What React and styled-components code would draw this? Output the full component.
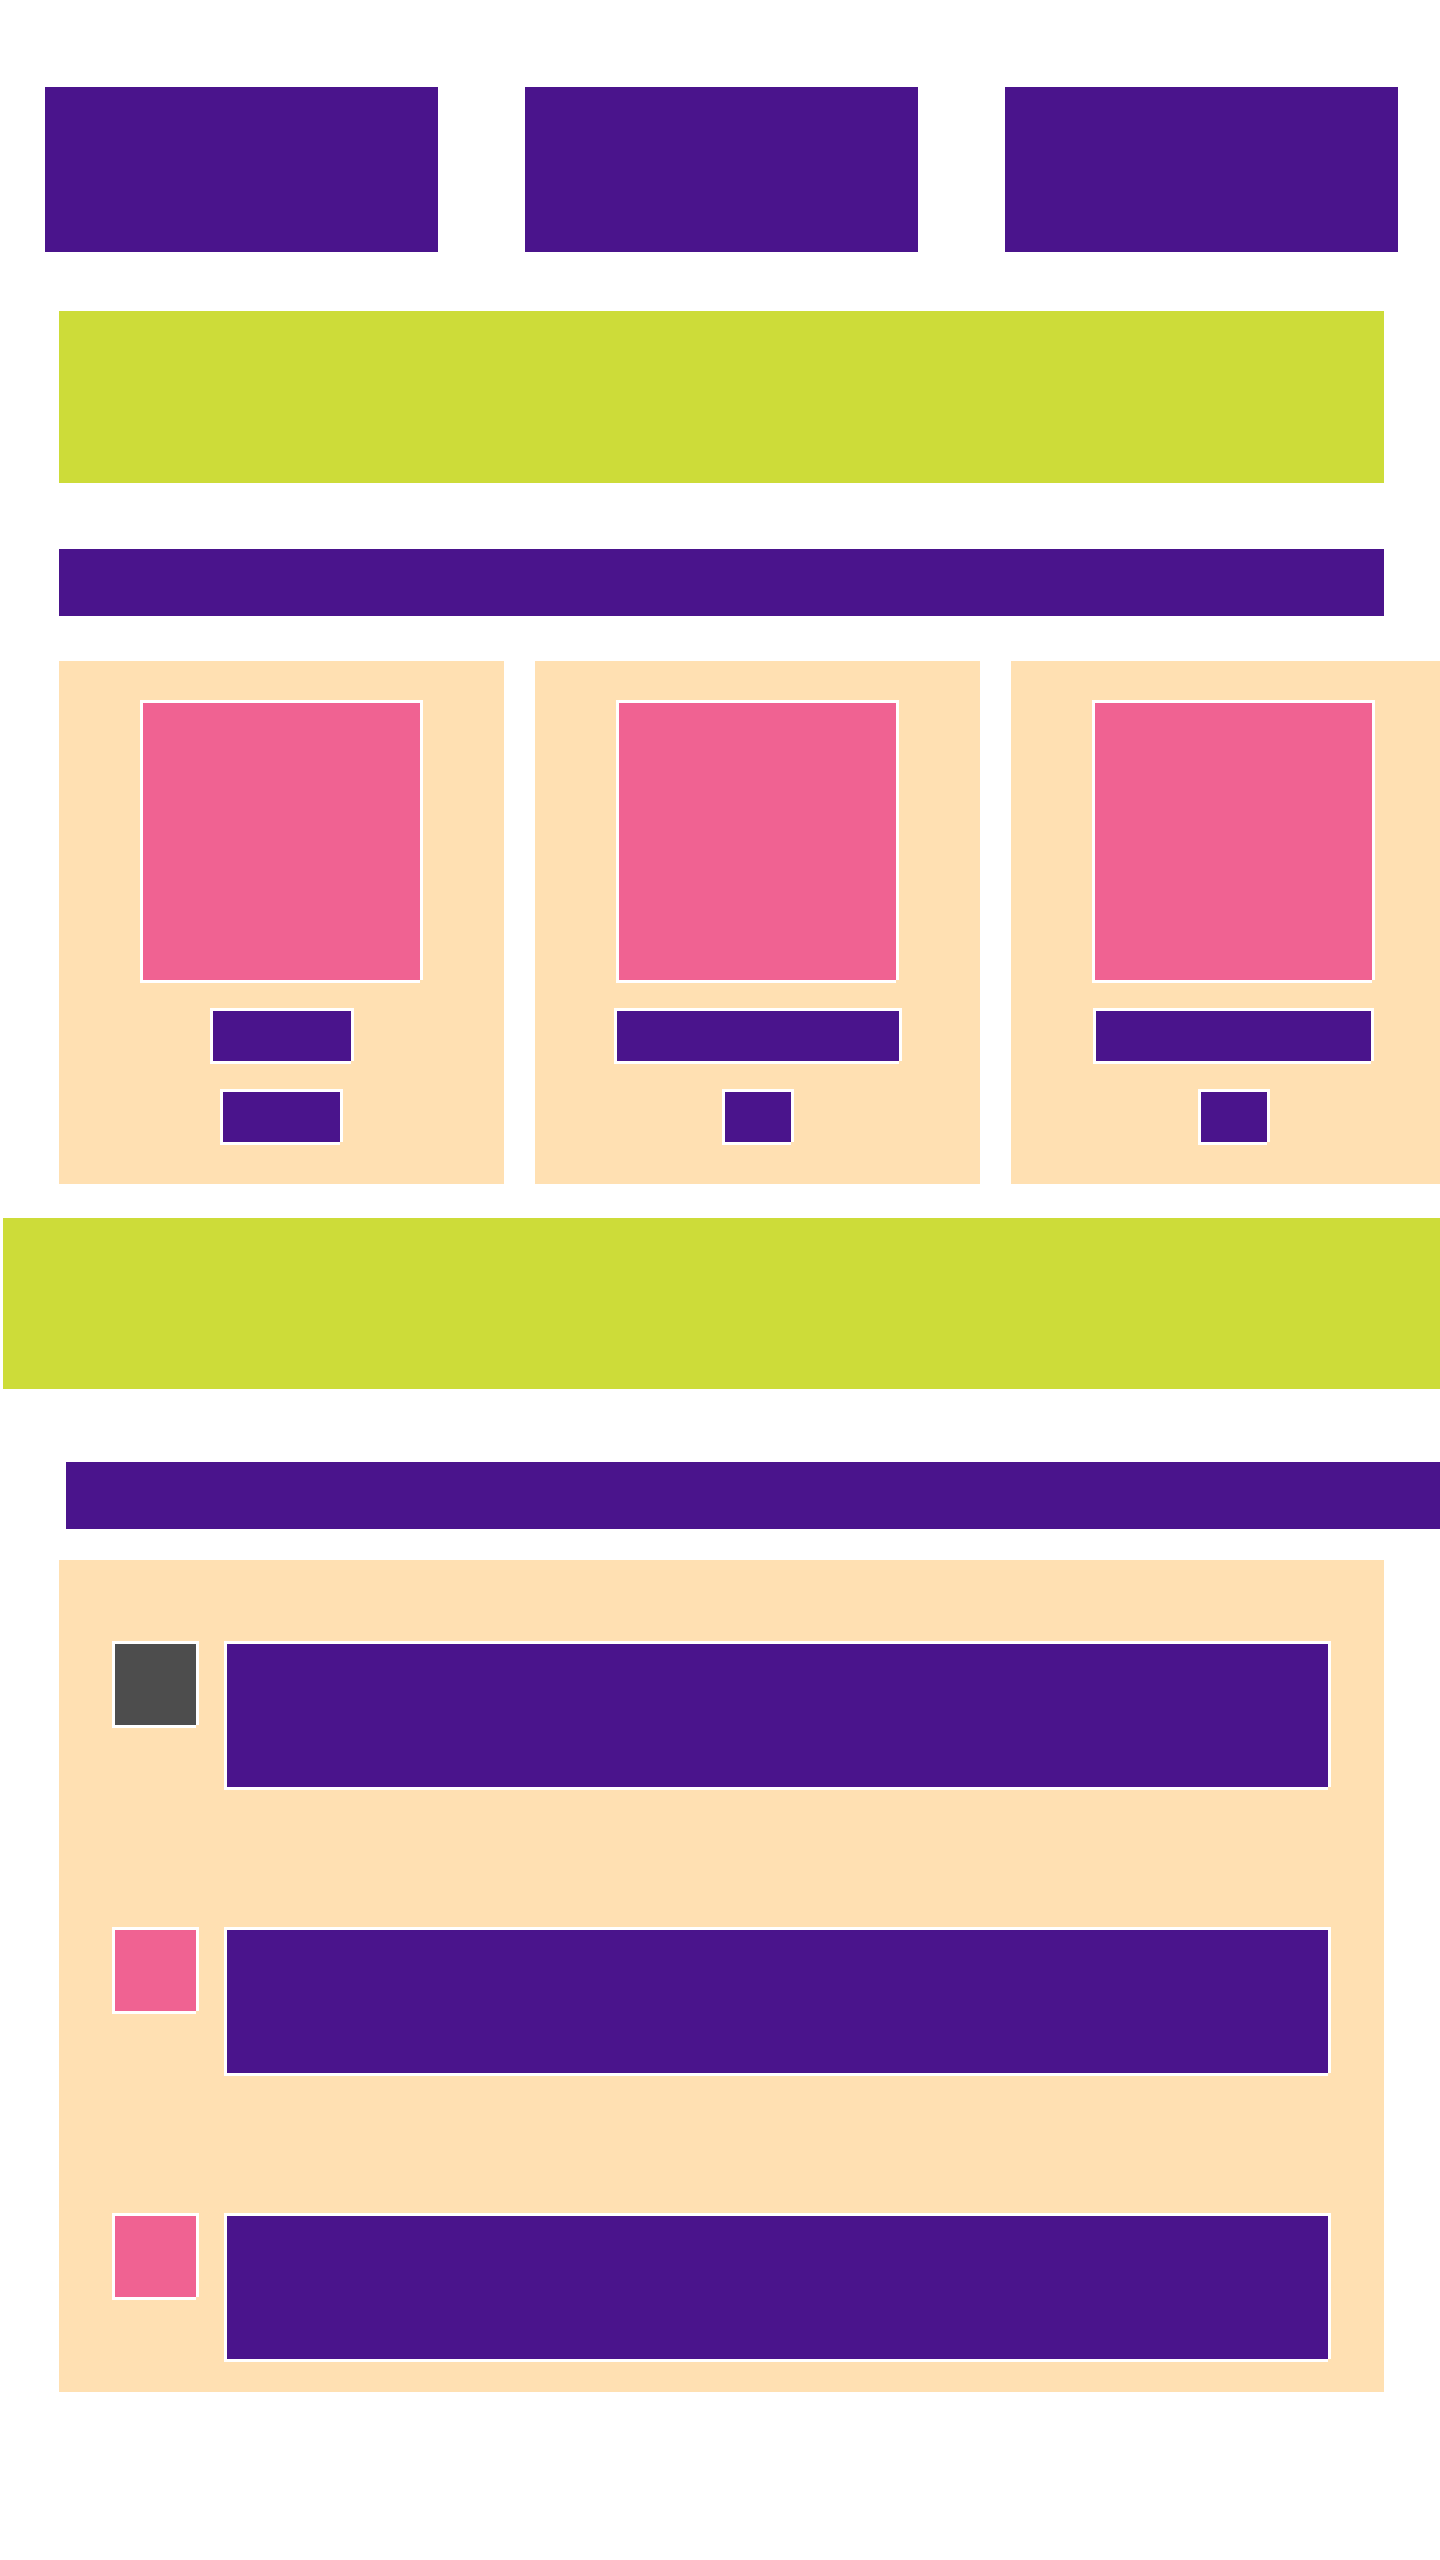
import React from 'react'
import styled, { createGlobalStyle } from 'styled-components'

const PURPLE = '#4a148c'
const LIME = '#cddc39'
const TAN = '#ffe0b2'
const PINK = '#f06292'

const GlobalStyle = createGlobalStyle`
  html, body {
    margin: 0;
    padding: 0;
    background: #fff;
    font-family: 'Liberation Sans', Arial, sans-serif;
  }
  body {
    overflow-x: hidden;
  }
`

const Page = styled.div`
  width: 1440px;
  overflow: hidden;
  padding: 87px 0 168px;
`

const TopRow = styled.div`
  display: flex;
  gap: 87px;
  padding-left: 45px;
`

const Tile = styled.div`
  width: 393px;
  height: 165px;
  background: ${PURPLE};
  flex-shrink: 0;
`

const Banner = styled.div`
  height: ${p => p.$h}px;
  margin-top: ${p => p.$top}px;
  margin-left: ${p => p.$left}px;
  width: ${p => (p.$w ? `${p.$w}px` : 'auto')};
  margin-right: ${p => (p.$w ? 0 : -40)}px;
  background: ${p => p.$bg};
`

const CardRow = styled.div`
  display: flex;
  gap: 31px;
  padding-left: 59px;
  margin-top: 45px;
`

const Card = styled.div`
  flex-shrink: 0;
  width: 445px;
  height: 523px;
  box-sizing: border-box;
  padding-top: 39px;
  background: ${TAN};
  display: flex;
  flex-direction: column;
  align-items: center;
  gap: 25px;
`

// white frame with the little bottom-right notch seen in the mock
const Framed = styled.div`
  position: relative;
  box-sizing: border-box;
  flex-shrink: 0;
  border: 3px solid #fff;
  background: ${p => p.$bg};

  &::after {
    content: '';
    position: absolute;
    right: -3px;
    bottom: -3px;
    width: 3px;
    height: 3px;
    background: ${TAN};
  }
`

const Picture = styled(Framed)`
  width: 283px;
  height: 283px;
`

const Button = styled(Framed)`
  width: ${p => p.$w}px;
  height: 56px;
`

const Panel = styled.div`
  margin: 31px 0 0 59px;
  width: 1325px;
  box-sizing: border-box;
  padding: 81px 53px 30px;
  background: ${TAN};
  display: flex;
  flex-direction: column;
  gap: 137px;
`

const Row = styled.div`
  display: flex;
  align-items: flex-start;
  gap: 25px;
`

const Thumb = styled(Framed)`
  width: 87px;
  height: 87px;
`

const Body = styled(Framed)`
  flex: 1;
  height: 149px;
`

const cards = [
  [144, 123],
  [288, 72],
  [281, 72],
]

const rows = ['#4d4d4d', PINK, PINK]

export default function App() {
  return (
    <>
      <GlobalStyle />
      <Page>
        <TopRow>
          <Tile />
          <Tile />
          <Tile />
        </TopRow>

        <Banner $bg={LIME} $h={172} $top={59} $left={59} $w={1325} />
        <Banner $bg={PURPLE} $h={67} $top={66} $left={59} $w={1325} />

        <CardRow>
          {cards.map(([a, b], i) => (
            <Card key={i}>
              <Picture $bg={PINK} />
              <Button $bg={PURPLE} $w={a} />
              <Button $bg={PURPLE} $w={b} />
            </Card>
          ))}
        </CardRow>

        <Banner $bg={LIME} $h={171} $top={34} $left={3} />
        <Banner $bg={PURPLE} $h={67} $top={73} $left={66} />

        <Panel>
          {rows.map((c, i) => (
            <Row key={i}>
              <Thumb $bg={c} />
              <Body $bg={PURPLE} />
            </Row>
          ))}
        </Panel>
      </Page>
    </>
  )
}
